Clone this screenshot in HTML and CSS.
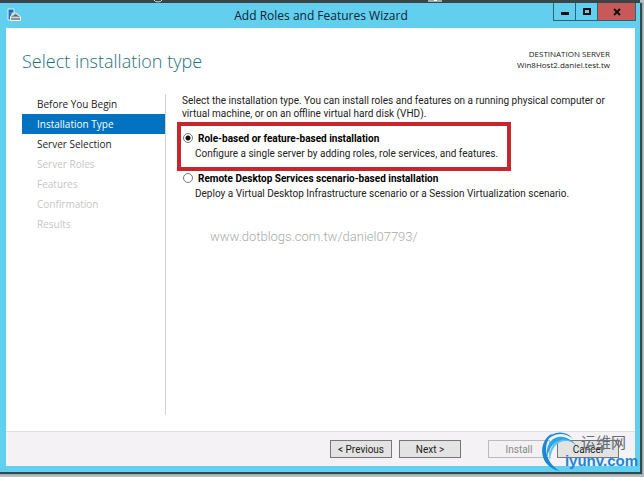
FILE: index.html
```
<!doctype html>
<html lang="en">
	<head>
		<meta charset="utf-8">
		<title>Add Roles and Features Wizard</title>
		<link rel="stylesheet" href="styles.css">
	</head>
	<body>
		<div class="backdrop">
			<svg class="scrap" viewBox="0 0 640 3" preserveAspectRatio="none">
				<path d="M154 0q1 2 4 2t4-2" fill="none" stroke="#ddd" stroke-width="1"/>
				<path d="M428 0h14v2h-14z" fill="#aaa"/>
				<path d="M434 0h3v1h-3z" fill="#fff"/>
			</svg>
		</div>

		<div class="window">
			<header class="titlebar">
				<svg class="appIcon" viewBox="0 0 14 14">
					<path d="M1 1h6v4H5v7H1z" fill="#2f79b7" stroke="#d5f0fa"/>
					<path d="M2 3h4" stroke="#1d5f9c"/>
					<path d="M3.500 8.500L8.500 5l5 3.500v4h-10z" fill="#8b9296" stroke="#eef6f8"/>
					<path d="M4 9.500h9" stroke="#d5dadd"/>
					<path d="M7 7.500h3" stroke="#5f676c"/>
				</svg>
				<h1>Add Roles and Features Wizard</h1>
				<div class="controls">
					<button type="button" class="minimize" aria-label="Minimize"><svg viewBox="0 0 10 10"><path d="M1 5h8v3H1z"/></svg></button>
					<button type="button" class="maximize" aria-label="Maximize"><svg viewBox="0 0 10 10"><path d="M1 1h8v7H1zM3 3v3h4V3z" fill-rule="evenodd"/></svg></button>
					<button type="button" class="close" aria-label="Close"><svg viewBox="0 0 10 10"><path d="M2 2l6 6M8 2L2 8" stroke="#111" stroke-width="2"/></svg></button>
				</div>
			</header>

			<main class="client">
				<div class="heading">
					<h2>Select installation type</h2>
					<p class="destination">DESTINATION SERVER<br>Win8Host2.daniel.test.tw</p>
				</div>

				<div class="body">
					<ul class="steps">
						<li>Before You Begin</li>
						<li class="active">Installation Type</li>
						<li>Server Selection</li>
						<li class="disabled">Server Roles</li>
						<li class="disabled">Features</li>
						<li class="disabled">Confirmation</li>
						<li class="disabled">Results</li>
					</ul>

					<div class="page">
						<p class="intro">Select the installation type. You can install roles and features on a running physical computer or virtual machine, or on an offline virtual hard disk (VHD).</p>

						<div class="option marked">
							<input type="radio" name="type" id="role" checked>
							<label for="role">Role-based or feature-based installation</label>
							<p>Configure a single server by adding roles, role services, and features.</p>
						</div>
						<div class="option">
							<input type="radio" name="type" id="remote">
							<label for="remote">Remote Desktop Services scenario-based installation</label>
							<p>Deploy a Virtual Desktop Infrastructure scenario or a Session Virtualization scenario.</p>
						</div>

						<p class="credit">www.dotblogs.com.tw/daniel07793/</p>
					</div>
				</div>

				<footer class="buttons">
					<button type="button">&lt; Previous</button>
					<button type="button">Next &gt;</button>
					<button type="button" class="install" disabled>Install</button>
					<button type="button">Cancel</button>
				</footer>
			</main>
		</div>

		<div class="watermark">
			<svg viewBox="0 0 40 42">
				<path d="M19 40C-3 36-4 10 12 2 1 13 3 31 19 40z" fill="#1c86d8"/>
				<path d="M4 12C9 0 24-2 32 8 23 0 11 2 4 12z" fill="#1c86d8"/>
				<path d="M6 27C3 6 22-2 36 15 25 4 9 8 6 27z" fill="#2aa5e6"/>
				<path d="M9 30C6 13 20 3 33 12 20 6 10 14 9 30z" fill="#5fc0ef"/>
			</svg>
			<span class="name" lang="zh">运维网</span>
			<span class="domain">iyunv.com</span>
		</div>
	</body>
</html>
```

FILE: styles.css
```
html, body {
	margin: 0;
	padding: 0;
	font-family: Roboto, "Open Sans", sans-serif;
	font-size: 10px;
	line-height: 13px;
	color: #222;
}

body {
	display: flex;
	flex-direction: column;
	position: relative;
	height: 100vh;
	box-sizing: border-box;
	padding: 0 4px 5px 0;
	background-color: #b9bcbd;
}

h1, h2, p, ul {
	margin: 0;
	padding: 0;
	font-weight: normal;
}

.backdrop {
	height: 3px;
	background-color: #3b4547;
}

.scrap {
	display: block;
	width: 100%;
	height: 3px;
}

.window {
	flex: 1;
	display: flex;
	flex-direction: column;
	padding: 0 5px 6px 6px;
	background-color: #62cfee;
	box-shadow: 1px 1px 1px 1px #2c4a50;
}

.titlebar {
	display: flex;
	align-items: flex-start;
	height: 25px;
}

.appIcon {
	width: 14px;
	height: 14px;
	margin-top: 5px;
	margin-left: 1px;
	margin-right: 68px;
}

.titlebar h1 {
	flex: 1;
	font-family: "Open Sans", sans-serif;
	font-size: 12px;
	line-height: 25px;
	text-align: center;
	color: #123;
}

.controls {
	display: flex;
	margin-right: -1px;
	border: 1px solid #2b6474;
	border-top: 0;
}

.controls button {
	display: flex;
	align-items: center;
	justify-content: center;
	width: 22px;
	height: 17px;
	padding: 0;
	border: 0 none;
	border-right: 1px solid #2b6474;
	background-color: transparent;
}

.controls .close {
	width: 37px;
	border-right: 0;
	background-color: #c75a58;
}

.controls svg {
	width: 10px;
	height: 10px;
	fill: #111;
}

.client {
	flex: 1;
	display: flex;
	flex-direction: column;
	background-color: #fff;
}

.heading {
	display: flex;
	justify-content: space-between;
	padding: 20px 25px 0 16px;
	height: 46px;
	font-family: "Open Sans", sans-serif;
}

.heading h2 {
	font-size: 18px;
	line-height: 26px;
	font-weight: 300;
	color: #1f6f7a;
}

.destination {
	font-size: 8px;
	line-height: 11px;
	text-align: right;
}

.body {
	flex: 1;
	display: flex;
}

.steps {
	list-style: none;
	width: 143px;
	margin-left: 16px;
	margin-bottom: 16px;
	border-right: 1px solid #d4d4d4;
	font-family: "Open Sans", sans-serif;
}

.steps li {
	padding-left: 15px;
	line-height: 20px;
}

.steps li.active {
	background-color: #0072c0;
	color: #fff;
}

.steps li.disabled { color: #c6c6c6; }

.page {
	flex: 1;
	padding-right: 25px;
}

.intro {
	margin-left: 16px;
}

.option {
	display: grid;
	grid-template-columns: 10px 1fr;
	column-gap: 5px;
	row-gap: 2px;
	margin-left: 11px;
	padding: 1px 6px 4px;
}

.option.marked {
	width: 322px;
	margin-top: 2px;
	padding: 6px 2px 7px;
	border: 4px solid #c9252d;
}

.option label {
	font-weight: bold;
	color: #000;
}

.option p {
	grid-column: 1 / 3;
	margin-left: 12px;
}

.option input {
	appearance: none;
	width: 10px;
	height: 10px;
	margin: 1px 0 0;
	border: 1px solid #777;
	border-radius: 50%;
	background-color: #fff;
}

.option input:checked {
	background-image: radial-gradient(circle, #111 0 2px, #fff 3px);
}

.credit {
	margin: 24px 0 0 44px;
	font-size: 13px;
	font-weight: 300;
	line-height: 18px;
	color: #aaa;
}

.buttons {
	display: flex;
	justify-content: flex-end;
	gap: 7px;
	padding: 8px 16px;
	border-top: 1px solid #dedede;
	background-color: #f5f2f5;
}

.buttons button {
	width: 62px;
	height: 18px;
	padding: 0;
	border: 1px solid #777;
	background-color: #e3e3e3;
	font: inherit;
	color: #222;
}

.buttons .install {
	margin-left: 20px;
	border-color: #bbb;
	background-color: #f3f1f3;
	color: #888;
}

/* site mark laid over the corner of the window */
.watermark {
	position: absolute;
	right: 6px;
	bottom: 8px;
	display: grid;
	grid-template-columns: 22px auto;
	pointer-events: none;
}

.watermark svg {
	position: absolute;
	left: -2px;
	top: 0;
	width: 40px;
	height: 42px;
}

.watermark span { grid-column: 2; }

.watermark .name {
	padding-left: 16px;
	font-family: "Noto Sans CJK SC", sans-serif;
	font-size: 15px;
	line-height: 22px;
	color: #666c74;
}

.watermark .domain {
	font-family: "Liberation Sans", sans-serif;
	font-size: 15px;
	font-weight: bold;
	line-height: 16px;
	color: #1c86d8;
}
```
